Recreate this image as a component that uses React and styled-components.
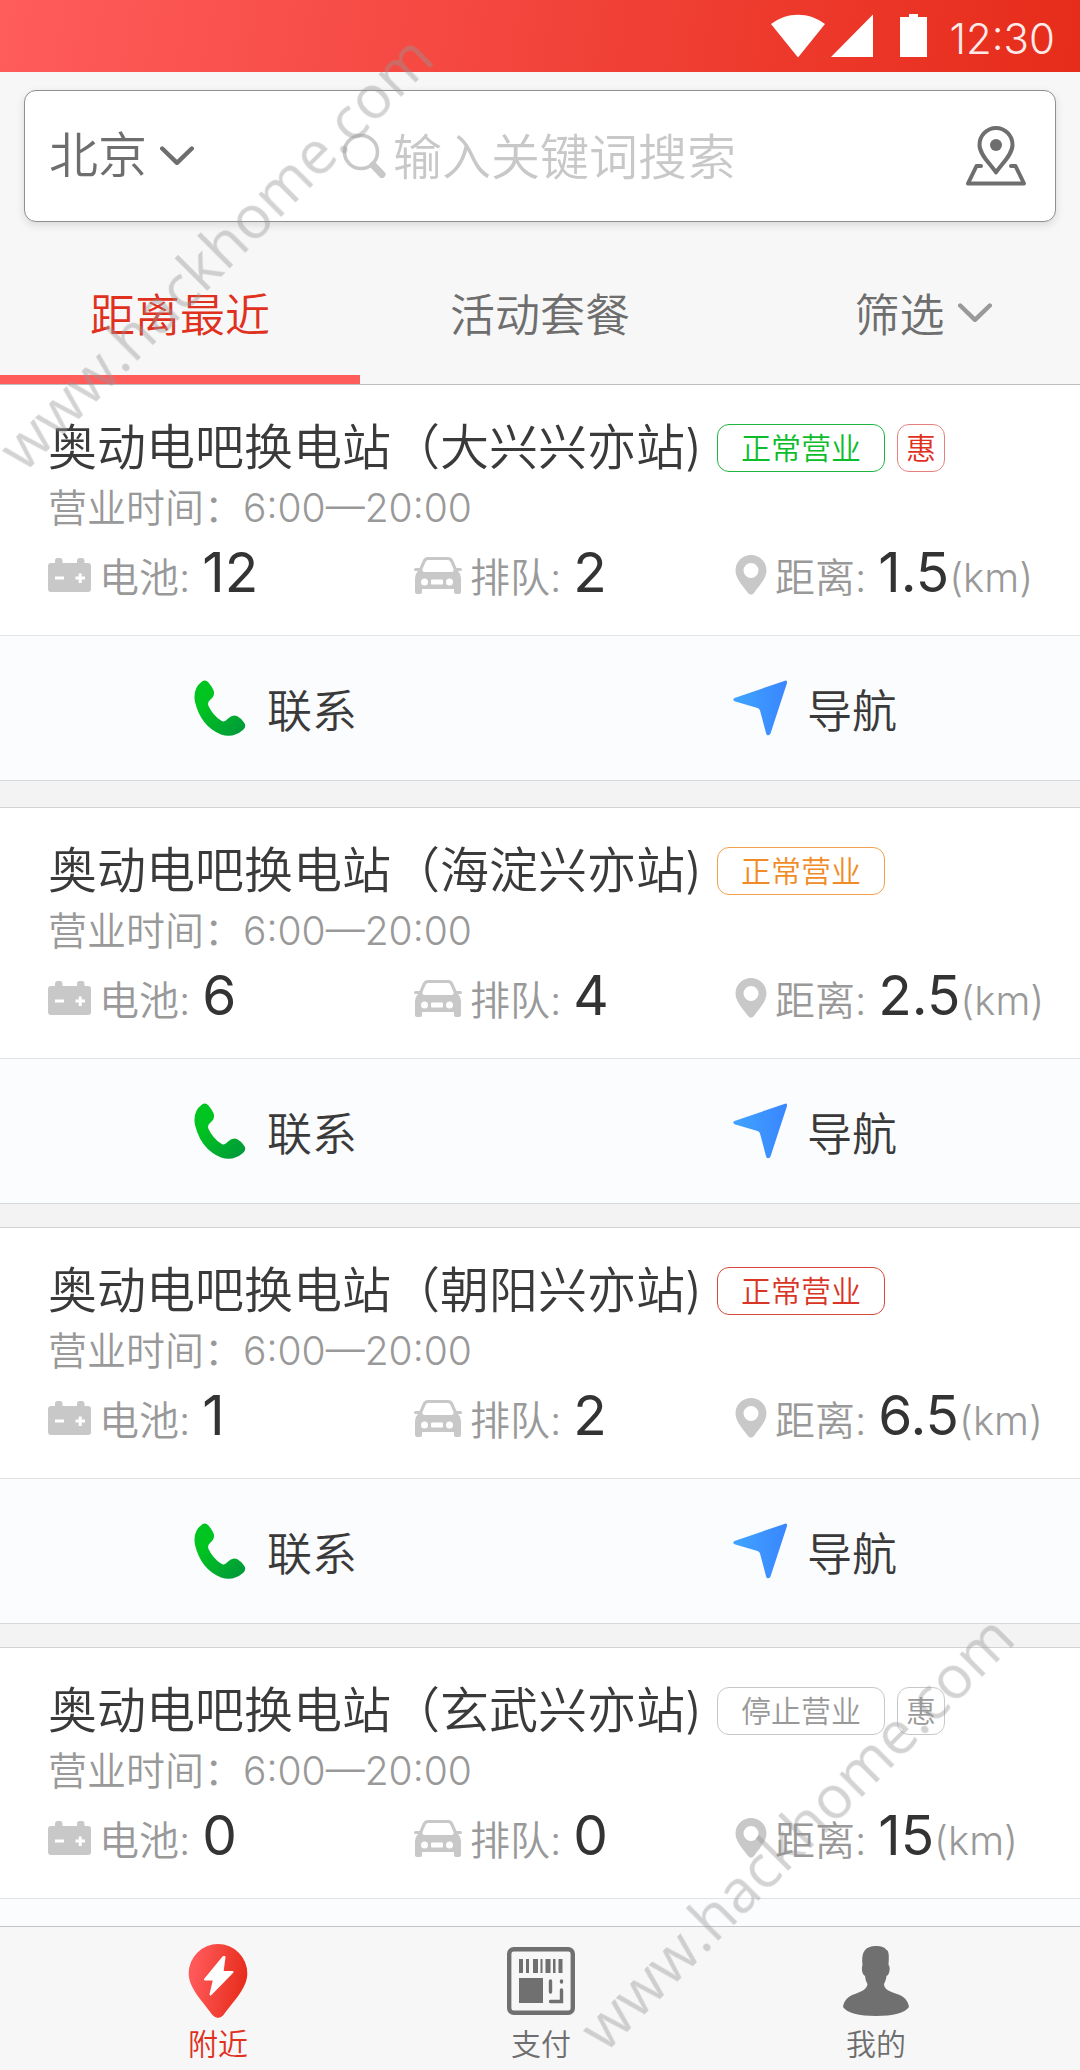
import React, { useState } from "react";
import styled, { createGlobalStyle } from "styled-components";

const GlobalStyle = createGlobalStyle`
  * {
    box-sizing: border-box;
  }
  body {
    margin: 0;
    background: #f7f7f7;
    font-family: Inter, "Noto Sans CJK SC", sans-serif;
    font-weight: 350;
    color: #3a3a3a;
  }
  button,
  input,
  select {
    font: inherit;
    color: inherit;
    border: none;
    background: transparent;
    padding: 0;
    margin: 0;
  }
  svg {
    display: block;
    flex: none;
  }
`;

const Page = styled.div`
  position: relative;
  display: flex;
  flex-direction: column;
  height: 100vh;
  overflow: hidden;
`;

const StatusBar = styled.div`
  display: flex;
  align-items: center;
  justify-content: flex-end;
  flex: none;
  height: 72px;
  padding-right: 25px;
  background: linear-gradient(100deg, #ff5c5c, #e62c1a);
  color: #fff;
`;

const Clock = styled.span`
  margin-left: 20px;
  padding-top: 6px;
  font-size: 42px;
  line-height: 48px;
  opacity: 0.9;
`;

const SearchBox = styled.form`
  display: flex;
  align-items: center;
  flex: none;
  height: 132px;
  margin: 18px 24px 0;
  padding: 0 29px 0 24px;
  border: 1px solid #8f8f8f;
  border-radius: 12px;
  background: #fff;
  box-shadow: 0 3px 9px rgba(0, 0, 0, 0.12);
  font-size: 49px;
`;

const City = styled.label`
  display: flex;
  align-items: center;
  gap: 12px;
  color: #6e6e6e;
`;

const CitySelect = styled.select`
  appearance: none;
  outline: none;
  line-height: 72px;
  cursor: pointer;
`;

const Keyword = styled.label`
  display: flex;
  align-items: center;
  flex: 1;
  gap: 7px;
  min-width: 0;
  margin-left: 148px;
`;

const KeywordInput = styled.input`
  flex: 1;
  min-width: 0;
  height: 72px;
  padding-top: 2px;
  outline: none;
  &::placeholder {
    color: #c8c8c8;
    opacity: 1;
  }
`;

const IconButton = styled.button`
  cursor: pointer;
`;

const Tabs = styled.nav`
  display: grid;
  grid-template-columns: repeat(3, 1fr);
  flex: none;
  height: 163px;
  padding-top: 18px;
  border-bottom: 1px solid #bdbdbd;
`;

const Tab = styled.button`
  display: flex;
  align-items: center;
  justify-content: center;
  gap: 13px;
  position: relative;
  padding-top: 10px;
  padding-left: ${({ $menu }) => ($menu ? "46px" : "0")};
  font-size: 45px;
  color: ${({ $active }) => ($active ? "#e0301e" : "#6e6e6e")};
  border-bottom: 9px solid ${({ $active }) => ($active ? "#ff5c5c" : "transparent")};
  cursor: pointer;
  & + &::before {
    content: "";
    position: absolute;
    left: 0;
    top: 42px;
    width: 1px;
    height: 60px;
    background: #c4c4c4;
  }
`;

const StationList = styled.main`
  flex: 1;
  min-height: 0;
  overflow-y: auto;
  background: #f3f3f3;
  scrollbar-width: none;
`;

const Card = styled.article`
  margin-bottom: 23px;
  background: #fff;
  border-bottom: 1px solid #d6d8dc;
  & + & {
    border-top: 1px solid #d2d2d2;
  }
  &:first-child {
    margin-bottom: 26px;
  }
`;

const Info = styled.div`
  height: 250px;
  padding: 33px 0 0 48px;
`;

const TitleRow = styled.div`
  display: flex;
  align-items: center;
  height: 60px;
`;

const Title = styled.h2`
  margin: 0 15px 0 0;
  font-size: 49px;
  font-weight: inherit;
  line-height: 60px;
  white-space: nowrap;
`;

const Badge = styled.span`
  height: 48px;
  margin-right: 12px;
  padding: 0 ${({ $small }) => ($small ? "8px" : "23px")};
  border: 1px solid ${({ $border }) => $border};
  border-radius: 12px;
  color: ${({ $color }) => $color};
  font-size: 30px;
  line-height: 46px;
  white-space: nowrap;
`;

const Hours = styled.p`
  margin: 0;
  font-size: 39px;
  line-height: 60px;
  color: #999;
`;

const Stats = styled.div`
  display: grid;
  grid-template-columns: 366fr 321fr 345fr;
  height: 70px;
`;

const Stat = styled.div`
  display: flex;
  align-items: center;
  gap: 8px;
  font-size: 40px;
  line-height: 68px;
  color: #999;
  white-space: nowrap;
`;

const Amount = styled.span`
  margin-left: 12px;
  font-size: 55px;
  font-weight: 400;
  color: #333;
`;

const Actions = styled.div`
  display: flex;
  height: 145px;
  border-top: 1px solid #e0e2e4;
  background: #fbfcfe;
`;

const Action = styled.button`
  display: flex;
  align-items: center;
  justify-content: center;
  gap: 20px;
  flex: 1;
  padding-left: 10px;
  font-size: 45px;
  cursor: pointer;
`;

const BottomNav = styled.nav`
  display: grid;
  grid-template-columns: 324fr 322fr 348fr;
  flex: none;
  height: 144px;
  padding: 0 30px 0 56px;
  border-top: 1px solid #c4c4c4;
  background: #f7f7f7;
`;

const NavItem = styled.a`
  display: flex;
  flex-direction: column;
  align-items: center;
  padding-top: 17px;
  font-size: 30px;
  line-height: 36px;
  text-decoration: none;
  color: ${({ $active }) => ($active ? "#e0301e" : "#6e6e6e")};
`;

const NavIcon = styled.span`
  display: flex;
  align-items: center;
  height: 74px;
  margin-bottom: 8px;
`;

const Watermark = styled.span`
  position: absolute;
  left: ${({ $left }) => $left}px;
  top: ${({ $top }) => $top}px;
  transform: rotate(-45deg);
  transform-origin: 0 53px;
  font-family: "Open Sans", sans-serif;
  font-size: 60px;
  font-weight: 400;
  line-height: 60px;
  color: rgba(150, 150, 150, 0.42);
  pointer-events: none;
`;

const Chevron = ({ color }) => (
  <svg width="34" height="20" viewBox="0 0 34 20" fill="none">
    <path
      d="M2.2 2.5 17 16.8 31.8 2.5"
      stroke={color}
      strokeWidth="4.4"
      strokeLinecap="round"
      strokeLinejoin="round"
    />
  </svg>
);

const SignalIcons = () => (
  <svg width="158" height="44" viewBox="0 0 158 44" fill="#fff">
    <path d="M0 10C16-2.500 38-2.500 54 10L27 43.500Z" />
    <path d="M102 .5V43H60Z" />
    <path d="M129 3h9V0h9v3h9v40h-27z" />
  </svg>
);

const SearchIcon = () => (
  <svg width="44" height="46" viewBox="0 0 44 46" fill="none" stroke="#c8c8c8">
    <circle cx="19" cy="19" r="16.500" strokeWidth="3.600" />
    <path d="M31 32 40 41.500" strokeWidth="7" strokeLinecap="round" />
  </svg>
);

const MapIcon = () => (
  <svg width="60" height="60" viewBox="0 0 60 60" fill="none" stroke="#6e6e6e" strokeWidth="4" strokeLinejoin="round" strokeLinecap="round">
    <path d="M30 46.500C24 37.500 13.500 28.500 13.500 19A16.500 17 0 0 1 46.500 19C46.500 28.500 36 37.500 30 46.500Z" />
    <circle cx="30" cy="19" r="6" fill="#6e6e6e" stroke="none" />
    <path d="M15 40H10.500L2 57.500H58L49.500 40H45" />
  </svg>
);

const BatteryIcon = () => (
  <svg width="43" height="34" viewBox="0 0 43 34">
    <path
      fill="#c8c8c8"
      d="M3 5H7V3Q7 0 9.500 0H12Q14.500 0 14.500 3V5H29V3Q29 0 31.500 0H34Q36.500 0 36.500 3V5H40Q43 5 43 8V31Q43 34 40 34H3Q0 34 0 31V8Q0 5 3 5Z"
    />
    <path d="M7 20H16M27.500 20H37M32.200 15.500V25" stroke="#fff" strokeWidth="3" />
  </svg>
);

const CarIcon = () => (
  <svg width="48" height="37" viewBox="0 0 48 37">
    <path
      fill="#c8c8c8"
      fillRule="evenodd"
      d="M14 0H34Q37.500 0 39 3L42.500 11H46.500Q48 11 48 12.500T46.500 14H44Q47 17 47 21V35Q47 37 45 37H42Q40 37 40 35V32H8V35Q8 37 6 37H3Q1 37 1 35V21Q1 17 4 14H1.500Q0 14 0 12.500T1.500 11H5.500L9 3Q10.500 0 14 0ZM14 3Q12.500 3 11.500 5L8.500 12Q8 15 10.500 15H37.500Q40 15 39.500 12L36.500 5Q35.500 3 34 3Z"
    />
    <circle cx="10.500" cy="25" r="3.500" fill="#fff" />
    <circle cx="35.500" cy="25" r="3.500" fill="#fff" />
    <rect x="17" y="22.500" width="12" height="5" rx="1" fill="#fff" />
  </svg>
);

const PinIcon = () => (
  <svg width="32" height="40" viewBox="0 0 32 40">
    <path
      fill="#c8c8c8"
      fillRule="evenodd"
      d="M16 0A15.500 15.500 0 0 1 31.500 15.500C31.500 24 23 32 19 38Q16 41.500 13 38C9 32 .5 24 .5 15.500A15.500 15.500 0 0 1 16 0ZM16 8A7.500 7.500 0 1 0 16 23A7.500 7.500 0 1 0 16 8Z"
    />
  </svg>
);

const PhoneIcon = () => (
  <svg width="54" height="56" viewBox="0 0 54 56">
    <defs>
      <linearGradient id="phone" x1="0" y1="0" x2="1" y2="1">
        <stop offset="0.300" stopColor="#00c41f" />
        <stop offset="1" stopColor="#00963c" />
      </linearGradient>
    </defs>
    <path
      fill="url(#phone)"
      d="M9 1.500Q12.500-1 15.500 2.500Q19 6.500 20.800 11Q22 16 17.500 19.500Q14 22 15.500 26Q20 35.500 28 40.500Q31.500 43 34.500 39Q39 34 44 36Q48.500 38.500 51 42.500Q54 46.500 50 50Q40 58.500 28 54.500Q8 46.500 2 22Q-.5 8.500 9 1.500Z"
    />
  </svg>
);

const ArrowIcon = () => (
  <svg width="54" height="56" viewBox="0 0 54 56">
    <defs>
      <linearGradient id="arrow" x1="0" y1="0" x2="1" y2="0">
        <stop offset="0" stopColor="#3fa4ff" />
        <stop offset="1" stopColor="#3a86ff" />
      </linearGradient>
    </defs>
    <path
      fill="url(#arrow)"
      d="M1.500 18 52 .7Q54.300 0 54 3L37.500 53.500Q36.500 56 34 55Q33.300 54.500 33 53L27 30.500Q26.500 28.700 24.500 28L1.500 21.300Q-1 19.500 1.500 18Z"
    />
  </svg>
);

const NearbyIcon = () => (
  <svg width="60" height="74" viewBox="0 0 60 74">
    <defs>
      <linearGradient id="nearby" x1="0" y1="0.300" x2="1" y2="0.500">
        <stop offset="0.100" stopColor="#ff5858" />
        <stop offset="1" stopColor="#e62c1a" />
      </linearGradient>
    </defs>
    <path
      fill="url(#nearby)"
      d="M30 0A29.300 29.300 0 0 1 59.300 29.500C59.300 45 43 60 35.500 71Q30 77 24.500 71C17 60 .7 45 .7 29.500A29.300 29.300 0 0 1 30 0Z"
    />
    <path
      fill="#fff"
      stroke="#fff"
      strokeWidth="2"
      strokeLinejoin="round"
      d="M35.500 13 17 35.500H26L22.500 50.500 44.500 28H34.500L36.500 13Z"
    />
  </svg>
);

const PayIcon = () => (
  <svg width="68" height="68" viewBox="0 0 68 68" fill="#707070">
    <rect x="2.200" y="2.200" width="63.600" height="63.600" rx="4.500" fill="none" stroke="#707070" strokeWidth="4.400" />
    <path d="M12 12h4v14h-4zM19 12h3v14h-3zM26 12h5v14h-5zM33.500 12h2v14h-2zM38.500 12h5v14h-5zM46 12h2.500v14h-2.500zM51.500 12h4v14h-4z" />
    <rect x="12" y="31" width="24" height="25" />
    <path
      d="M43.500 34V45M54.500 34V35M54.500 43V54.500H43.500"
      fill="none"
      stroke="#707070"
      strokeWidth="3.400"
      strokeLinecap="round"
    />
  </svg>
);

const MineIcon = () => (
  <svg width="66" height="70" viewBox="0 0 66 70">
    <path
      fill="#707070"
      d="M33 0C38 0 42 1.500 43 3.500C46.500 4.500 46 12 45.500 19C47.500 20 47 29 43.500 30C43 34 42 36 41 38C41 43 46 45.500 54 48C62 50.500 65 55 66 61C62 67 50 70 33 70S4 67 0 61C1 55 4 50.500 12 48C19 45.500 24 43 24.500 38C23 36 22.500 33 22 30C18.500 28 18.500 21 19.500 19C18 6 22 0 33 0Z"
    />
  </svg>
);

const badgeColors = {
  idle: { $color: "#0bbd2b", $border: "#1fb63f" },
  busy: { $color: "#f08c28", $border: "#efa14e" },
  full: { $color: "#d93526", $border: "#d8483c" },
  closed: { $color: "#999", $border: "#c8c8c8" },
};

const stations = [
  { name: "大兴兴亦站", status: "idle", promo: true, battery: 12, queue: 2, distance: "1.5" },
  { name: "海淀兴亦站", status: "busy", battery: 6, queue: 4, distance: "2.5" },
  { name: "朝阳兴亦站", status: "full", battery: 1, queue: 2, distance: "6.5" },
  { name: "玄武兴亦站", status: "closed", promo: true, battery: 0, queue: 0, distance: "15" },
];

function Station({ station }) {
  const closed = station.status === "closed";
  return (
    <Card>
      <Info>
        <TitleRow>
          <Title>奥动电吧换电站（{station.name})</Title>
          <Badge {...badgeColors[station.status]}>
            {closed ? "停止营业" : "正常营业"}
          </Badge>
          {station.promo && (
            <Badge
              $small
              $color={closed ? "#999" : "#e0301e"}
              $border={closed ? "#c8c8c8" : "#e88080"}
            >
              惠
            </Badge>
          )}
        </TitleRow>
        <Hours>营业时间：6:00—20:00</Hours>
        <Stats>
          <Stat>
            <BatteryIcon />
            <span>
              电池:<Amount>{station.battery}</Amount>
            </span>
          </Stat>
          <Stat>
            <CarIcon />
            <span>
              排队:<Amount>{station.queue}</Amount>
            </span>
          </Stat>
          <Stat>
            <PinIcon />
            <span>
              距离:<Amount>{station.distance}</Amount>(km)
            </span>
          </Stat>
        </Stats>
      </Info>
      <Actions>
        {/* a closed station can't be called or navigated to */}
        {!closed && (
          <>
            <Action type="button">
              <PhoneIcon />
              联系
            </Action>
            <Action type="button">
              <ArrowIcon />
              导航
            </Action>
          </>
        )}
      </Actions>
    </Card>
  );
}

function App() {
  const [tab, setTab] = useState("near");
  const [keyword, setKeyword] = useState("");

  return (
    <Page>
      <GlobalStyle />
      <StatusBar>
        <SignalIcons />
        <Clock>12:30</Clock>
      </StatusBar>
      <SearchBox onSubmit={(e) => e.preventDefault()}>
        <City>
          <CitySelect aria-label="城市">
            <option>北京</option>
          </CitySelect>
          <Chevron color="#6e6e6e" />
        </City>
        <Keyword>
          <SearchIcon />
          <KeywordInput
            type="text"
            aria-label="搜索"
            placeholder="输入关键词搜索"
            value={keyword}
            onChange={(e) => setKeyword(e.target.value)}
          />
        </Keyword>
        <IconButton type="button" aria-label="地图">
          <MapIcon />
        </IconButton>
      </SearchBox>
      <Tabs>
        <Tab $active={tab === "near"} onClick={() => setTab("near")}>
          距离最近
        </Tab>
        <Tab $active={tab === "deal"} onClick={() => setTab("deal")}>
          活动套餐
        </Tab>
        <Tab $menu $active={tab === "filter"} onClick={() => setTab("filter")}>
          筛选
          <Chevron color="#999" />
        </Tab>
      </Tabs>
      <StationList>
        {stations.map((station) => (
          <Station key={station.name} station={station} />
        ))}
      </StationList>
      <BottomNav>
        <NavItem href="#nearby" $active>
          <NavIcon>
            <NearbyIcon />
          </NavIcon>
          附近
        </NavItem>
        <NavItem href="#pay">
          <NavIcon>
            <PayIcon />
          </NavIcon>
          支付
        </NavItem>
        <NavItem href="#mine">
          <NavIcon>
            <MineIcon />
          </NavIcon>
          我的
        </NavItem>
      </BottomNav>
      <Watermark $left={24} $top={421}>www.hackhome.com</Watermark>
      <Watermark $left={605} $top={2001}>www.hackhome.com</Watermark>
    </Page>
  );
}

export default App;
